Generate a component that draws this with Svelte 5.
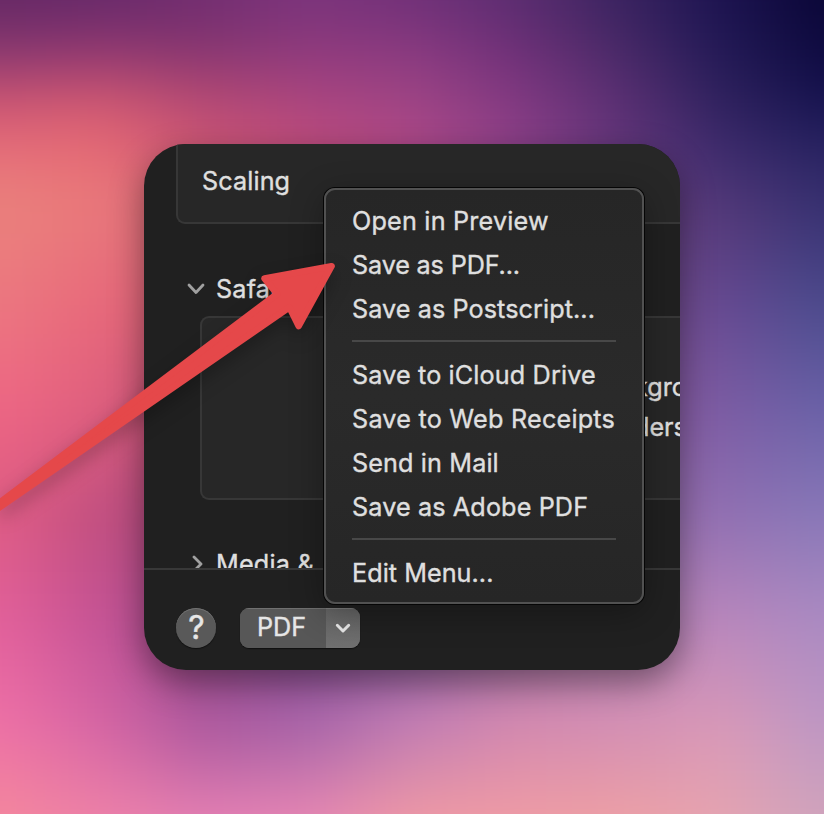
<script>
  // Wallpaper colours: nine columns, each row anchored at its own height
  const rows = [
    { y: 0, c: ['#642864', '#66296a', '#722d70', '#7b347c', '#703078', '#5b2d70', '#3a2360', '#1c1350', '#0a0636'] },
    { y: 51, c: ['#883770', '#903870', '#863670', '#8f3a7c', '#8a3a80', '#6f3078', '#4a2a68', '#221a56', '#0e0a40'] },
    { y: 103, c: ['#cf5672', '#d25972', '#b84b74', '#ac4680', '#a04585', '#843a82', '#5c3074', '#30225e', '#161450'] },
    { y: 154, c: ['#e8707a', '#e66c75', '#cc5472', '#c04c7a', '#b04888', '#8c4088', '#62367a', '#3e2c6e', '#2a2462'] },
    { y: 206, c: ['#ea827c', '#e9797b', '#d4687a', '#b04c78', '#a04484', '#844088', '#68407e', '#523878', '#363070'] },
    { y: 309, c: ['#ec7680', '#e8687a', '#d06078', '#a04a7c', '#804284', '#784488', '#7c4c88', '#664a92', '#4c4c8e'] },
    { y: 412, c: ['#ee6684', '#de5e7e', '#b44c74', '#90407c', '#784080', '#804c8c', '#8c5898', '#7c5ca4', '#6a62a8'] },
    { y: 515, c: ['#de5c84', '#c04e7e', '#a44880', '#884080', '#784888', '#885498', '#9a6ca8', '#906fb2', '#8878b8'] },
    { y: 618, c: ['#e2609a', '#c45294', '#a04a8e', '#8c4c94', '#8c5ca0', '#a070a8', '#b482b4', '#b886bc', '#aa8ac2'] },
    { y: 721, c: ['#ee70a6', '#d464a4', '#a8569c', '#a463a8', '#c07cb4', '#d288b0', '#d28eb4', '#d898b8', '#bc96c4'] },
    { y: 824, c: ['#f4889c', '#ee82a8', '#e680b4', '#e888b4', '#f09aa4', '#f09ca4', '#eea0a4', '#e6a4b0', '#d0a4bc'] }
  ];
  const rgb = (hex) => [1, 3, 5].map((i) => parseInt(hex.slice(i, i + 2), 16));
  const mix = (a, b, t) => a.map((v, i) => v + (b[i] - v) * t);
  const clamp = (v, lo, hi) => Math.min(hi, Math.max(lo, v));

  function rowColour(row, x) {
    const p = clamp(x / 103, 0, 8);
    const i = Math.min(7, Math.floor(p));
    return mix(rgb(row.c[i]), rgb(row.c[i + 1]), p - i);
  }
  function colourAt(x, y) {
    const cy = clamp(y, 0, 824);
    let i = 0;
    while (i < rows.length - 2 && rows[i + 1].y < cy) i++;
    const t = (cy - rows[i].y) / (rows[i + 1].y - rows[i].y);
    return mix(rowColour(rows[i], x), rowColour(rows[i + 1], x), t).map(Math.round).join(',');
  }

  const size = 26;
  const cells = [];
  for (let y = -4 * size; y < 814 + 4 * size; y += size) {
    for (let x = -4 * size; x < 824 + 4 * size; x += size) {
      cells.push({ x, y, fill: `rgb(${colourAt(x + size / 2, y + size / 2)})` });
    }
  }

  const groups = [
    [
      { label: 'Open in Preview', ls: 0.2 },
      { label: 'Save as PDF...', ls: -0.15 },
      { label: 'Save as Postscript...', ls: 0.08 }
    ],
    [
      { label: 'Save to iCloud Drive', ls: 0.13 },
      { label: 'Save to Web Receipts', ls: 0.22 },
      { label: 'Send in Mail', ls: 0.12 },
      { label: 'Save as Adobe PDF', ls: 0.12 }
    ],
    [{ label: 'Edit Menu...', ls: 0.04 }]
  ];
</script>

<div class="desktop">
  <svg class="wallpaper" width="824" height="814" viewBox="0 0 824 814">
    <filter id="soft" filterUnits="userSpaceOnUse" x="-104" y="-104" width="1032" height="1022" color-interpolation-filters="sRGB">
      <feGaussianBlur stdDeviation="22" />
    </filter>
    <g filter="url(#soft)">
      {#each cells as cell}
        <rect x={cell.x} y={cell.y} width={size + 1} height={size + 1} fill={cell.fill} />
      {/each}
    </g>
  </svg>

  <div class="window">
    <div class="options">
      <div class="box scaling"><span>Scaling</span></div>
      <div class="heading">
        <svg width="18" height="12" viewBox="0 0 18 12"><path d="M2 2 L9 9.5 L16 2" /></svg>
        <span>Safari</span>
      </div>
      <div class="box safari">
        <span>kgrounds</span>
        <span>ders and footers</span>
      </div>
      <div class="heading media">
        <svg width="18" height="18" viewBox="0 0 18 18"><path d="M7 2 L14 9 L7 16" /></svg>
        <span>Media &amp;</span>
      </div>
    </div>
    <div class="footer">
      <button class="help" aria-label="Help">?</button>
      <div class="split">
        <button class="pdf">PDF</button>
        <button class="drop" aria-label="More">
          <svg width="16" height="11" viewBox="0 0 16 11"><path d="M2.3 2.3 L8 8 L13.7 2.3" /></svg>
        </button>
      </div>
    </div>
  </div>

  <div class="menu">
    {#each groups as group, i}
      {#if i > 0}<div class="sep"></div>{/if}
      {#each group as item}
        <div class="item"><span style="letter-spacing: {item.ls}px">{item.label}</span></div>
      {/each}
    {/each}
  </div>

  <svg class="arrow" width="824" height="814" viewBox="0 0 824 814">
    <path d="M331.5 266.2 L264.5 278.5 L277.1 294 L-20 517.4 L-20 520.8 L289.4 307.3 L298.7 326 Z" />
  </svg>
</div>

<style>
  :global(body) { margin: 0; overflow: hidden; }
  .desktop {
    position: relative;
    box-sizing: border-box;
    width: 824px;
    height: 814px;
    padding: 144px;
    overflow: hidden;
    background: #8c4088;
    font: 400 25.2px/30px Inter, "Liberation Sans", sans-serif;
    color: #dfdfdf;
    -webkit-text-stroke: 0.4px currentColor;
  }
  .wallpaper { position: absolute; inset: 0; }
  .window {
    position: relative;
    display: flex;
    flex-direction: column;
    width: 536px;
    height: 526px;
    border-radius: 42px;
    background: #202020;
    overflow: hidden;
    box-shadow: 0 13px 34px rgba(0, 0, 0, 0.42);
    white-space: nowrap;
  }
  .options { flex: none; height: 424px; overflow: hidden; border-bottom: 2px solid #383838; }
  .box { box-sizing: border-box; border: 2px solid #373737; background: #272727; border-right: 0; }
  .scaling {
    height: 81px;
    margin: -1px 0 0 32px;
    padding: 23px 0 0 24px;
    border-top: 0;
    border-radius: 0 0 0 9px;
    letter-spacing: 0.1px;
  }
  .heading { display: flex; align-items: center; gap: 11px; height: 30px; margin: 50px 0 0 43px; letter-spacing: 0.2px; }
  .heading svg path { fill: none; stroke: #a0a0a0; stroke-width: 2.8; stroke-linecap: round; stroke-linejoin: round; }
  .safari {
    display: flex;
    flex-direction: column;
    gap: 10px;
    height: 184px;
    margin: 12px 0 0 56px;
    padding: 54px 0 0 432px;
    border-radius: 9px 0 0 9px;
  }
  .heading.media { margin-top: 49px; }
  .footer { display: flex; gap: 24px; padding: 38px 32px 0; }
  button { border: 0; padding: 0; margin: 0; font: inherit; color: #e6e6e6; }
  .help {
    width: 40px;
    height: 40px;
    padding-left: 1px;
    border-radius: 50%;
    background: #595959;
    box-shadow: inset 0 1px 0 #717171, 0 1px 1px #101010;
    font-size: 32px;
  }
  .split { display: flex; width: 120px; height: 40px; border-radius: 9px; overflow: hidden; background: #575757; box-shadow: 0 1px 1px #101010; }
  .pdf { width: 86px; padding: 0 3px 2px 0; background: #575757; box-shadow: inset 0 1px 0 #707070; }
  .drop { display: flex; flex: 1; align-items: center; justify-content: center; background: linear-gradient(#646464, #707070); box-shadow: inset 0 1px 0 #7c7c7c; }
  .drop svg path { fill: none; stroke: #e8e8e8; stroke-width: 3; stroke-linecap: round; stroke-linejoin: round; }
  .menu {
    position: absolute;
    left: 324px;
    top: 188px;
    box-sizing: border-box;
    width: 320px;
    height: 416px;
    padding: 9px 26px 7px;
    border: 2px solid #515151;
    border-radius: 11px;
    background: linear-gradient(#262626, #2a2a2a 50%, #262626);
    box-shadow: 0 0 0 1px #050505, 0 8px 34px rgba(0, 0, 0, 0.32);
    white-space: nowrap;
  }
  .item { display: flex; align-items: center; height: 44px; }
  .sep { height: 2px; margin: 9px 0 11px; background: #484848; }
  .arrow { position: absolute; inset: 0; filter: drop-shadow(0 8px 9px rgba(0, 0, 0, 0.26)); }
  .arrow path { fill: #e5484a; stroke: #e5484a; stroke-width: 6.6; stroke-linejoin: round; }
</style>
